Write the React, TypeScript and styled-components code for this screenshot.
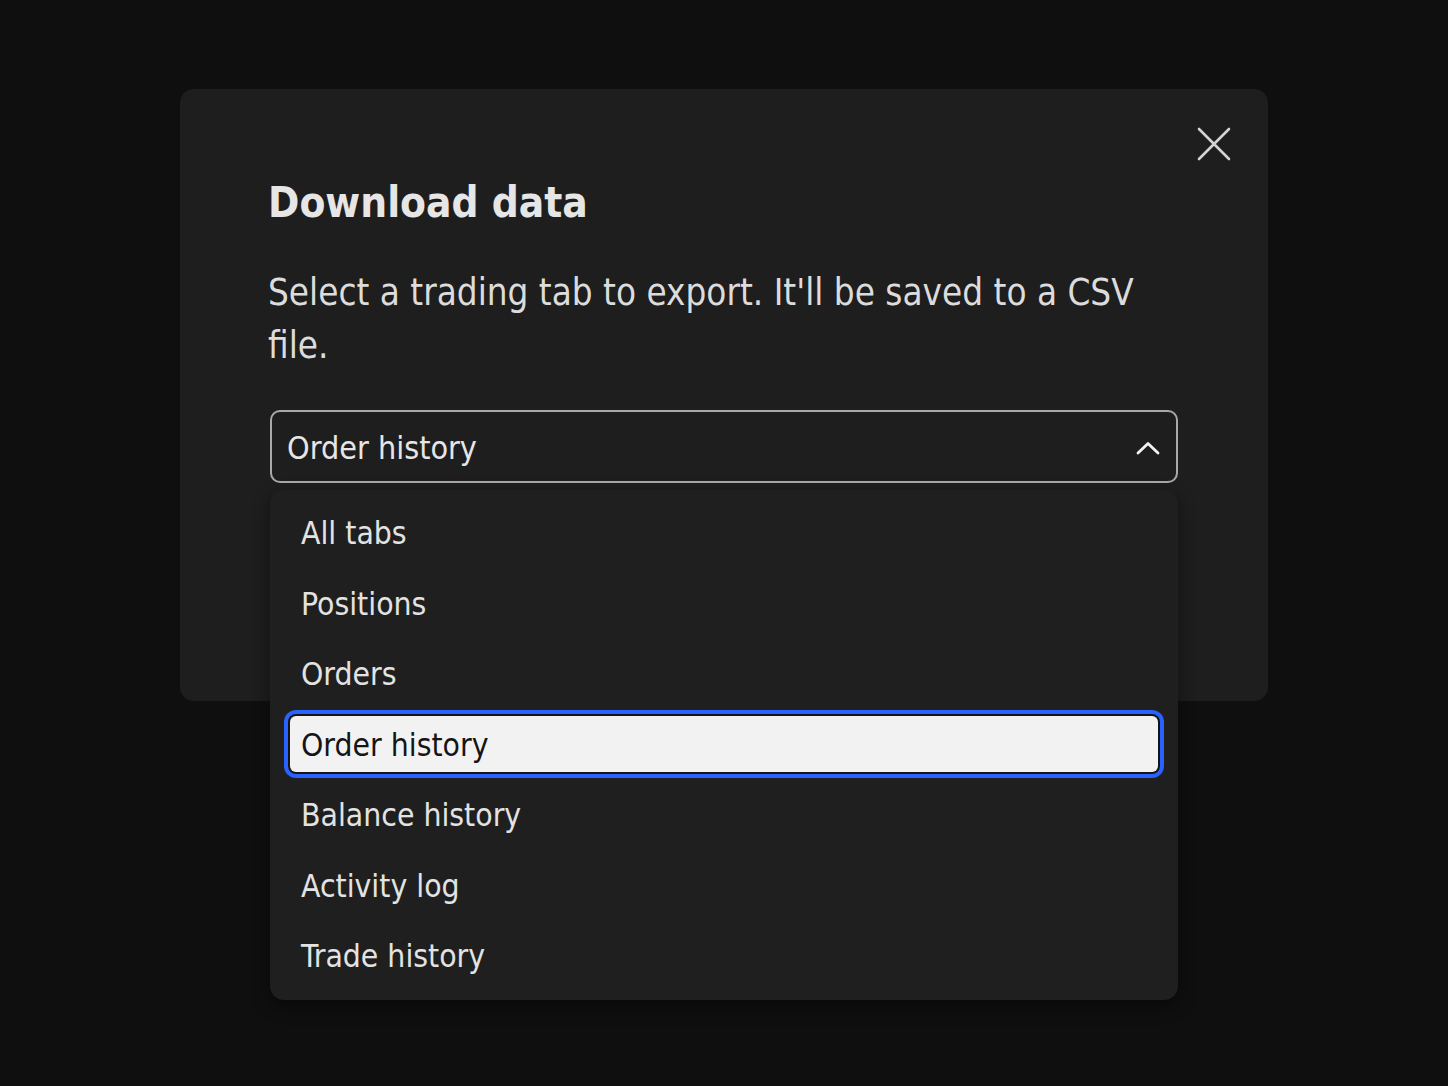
import React from "react";
import styled, { createGlobalStyle } from "styled-components";

const Global = createGlobalStyle`
  html, body { margin: 0; background: #0f0f0f; }
  body {
    font-family: "DejaVu Sans Condensed", "DejaVu Sans", sans-serif;
    color: #e3e3e3;
  }
`;

const Page = styled.div`
  min-height: 1086px;
  padding: 89px 0 0 180px;
  box-sizing: border-box;
`;

const Dialog = styled.div`
  position: relative;
  width: 1088px;
  box-sizing: border-box;
  padding: 86px 90px 218px 88px;
  background: #1e1e1e;
  border-radius: 14px;
`;

const CloseButton = styled.button`
  position: absolute;
  top: 37px;
  right: 36px;
  width: 36px;
  height: 36px;
  padding: 0;
  border: none;
  background: transparent;
  color: #d4d4d4;
  display: flex;
  align-items: center;
  justify-content: center;
`;

const Title = styled.h2`
  margin: 0;
  font-size: 42px;
  line-height: 56px;
  font-weight: 700;
  color: #e6e6e6;
`;

const Description = styled.p`
  margin: 35px 0 0;
  font-size: 36.5px;
  line-height: 53px;
  color: #dcdcdc;
`;

const SelectWrap = styled.div`
  position: relative;
  margin: 38px 0 0 2px;
`;

const SelectBox = styled.div`
  height: 73px;
  box-sizing: border-box;
  border: 2px solid #a9a9a9;
  border-radius: 10px;
  display: flex;
  align-items: center;
  justify-content: space-between;
  padding: 2px 16px 0 15px;
  font-size: 32px;
  color: #e6e6e6;
`;

const Menu = styled.ul`
  position: absolute;
  top: 80px;
  left: 0;
  right: 0;
  margin: 0;
  padding: 14.5px 20px 16.5px;
  list-style: none;
  background: #1f1f1f;
  border-radius: 14px;
  box-shadow: 0 6px 18px rgba(0, 0, 0, 0.45);
  display: flex;
  flex-direction: column;
  gap: 14.5px;
`;

const MenuItem = styled.li<{ $active?: boolean }>`
  height: 56px;
  display: flex;
  align-items: center;
  padding: 1px 0 0 11px;
  box-sizing: border-box;
  border-radius: 6px;
  font-size: 31.6px;
  color: ${(p) => (p.$active ? "#151515" : "#e3e3e3")};
  background: ${(p) => (p.$active ? "#f2f2f2" : "transparent")};
  box-shadow: ${(p) =>
    p.$active ? "0 0 0 2px #141414, 0 0 0 6px #2962ff" : "none"};
`;

const items = [
  "All tabs",
  "Positions",
  "Orders",
  "Order history",
  "Balance history",
  "Activity log",
  "Trade history",
];

export default function App() {
  const selected = "Order history";
  return (
    <Page>
      <Global />
      <Dialog>
        <CloseButton aria-label="Close">
          <svg width="34" height="34" viewBox="0 0 34 34" fill="none">
            <path
              d="M2 2L32 32M32 2L2 32"
              stroke="currentColor"
              strokeWidth="2.6"
              strokeLinecap="round"
            />
          </svg>
        </CloseButton>
        <Title>Download data</Title>
        <Description>
          Select a trading tab to export. It'll be saved to a CSV file.
        </Description>
        <SelectWrap>
          <SelectBox>
            <span>{selected}</span>
            <svg width="24" height="14" viewBox="0 0 24 14" fill="none">
              <path
                d="M2 12L12 2.5L22 12"
                stroke="#f2f2f2"
                strokeWidth="2.8"
                strokeLinecap="round"
                strokeLinejoin="round"
              />
            </svg>
          </SelectBox>
          <Menu>
            {items.map((item) => (
              <MenuItem key={item} $active={item === selected}>
                {item}
              </MenuItem>
            ))}
          </Menu>
        </SelectWrap>
      </Dialog>
    </Page>
  );
}
